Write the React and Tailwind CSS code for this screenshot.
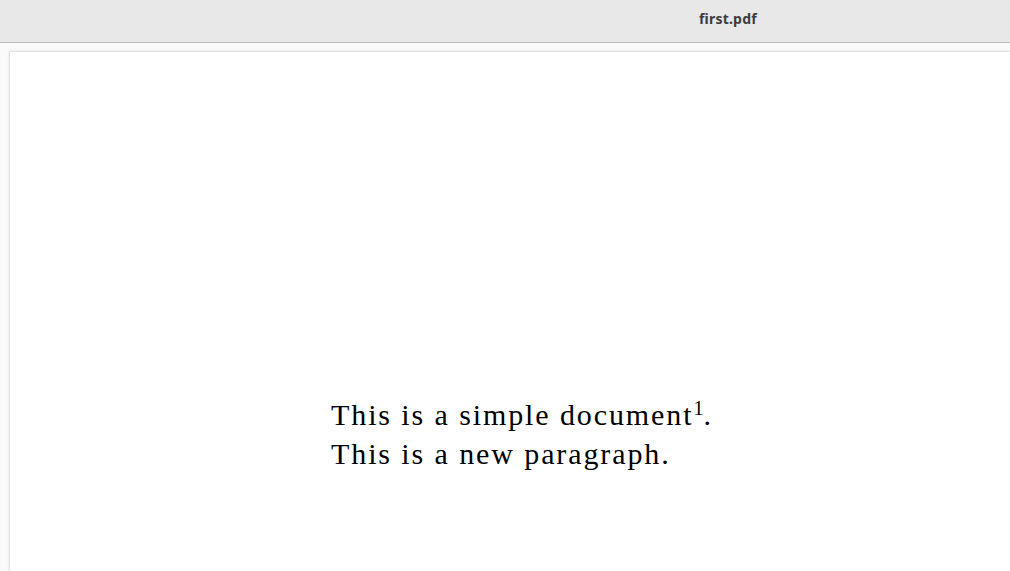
export default function App() {
  return (
    <div className="w-[1010px] h-[571px] overflow-hidden flex flex-col bg-[#fafafa]">
      <div className="h-[43px] shrink-0 bg-[#e8e8e8] border-b border-[#bdbdbd] flex items-center pl-[699px]">
        <span className="text-[14px] font-bold text-[#3c3c3c] leading-none -mt-[4px] tracking-[0.2px]" style={{ fontFamily: '"Noto Sans", sans-serif' }}>
          first.pdf
        </span>
      </div>
      <div className="flex-1 pt-[8px] pl-[9px]">
        <div className="h-full bg-white border-l border-t border-[#e2e2e2] shadow-[0_0_2px_rgba(0,0,0,0.12)] pl-[321px] pt-[343px]">
          <div className="text-[30px] leading-[39px] text-black tracking-[1.9px]" style={{ fontFamily: '"Liberation Serif", serif' }}>
            <div>This is a simple document<sup className="text-[20px] tracking-normal">1</sup>.</div>
            <div>This is a new paragraph.</div>
          </div>
        </div>
      </div>
    </div>
  );
}
